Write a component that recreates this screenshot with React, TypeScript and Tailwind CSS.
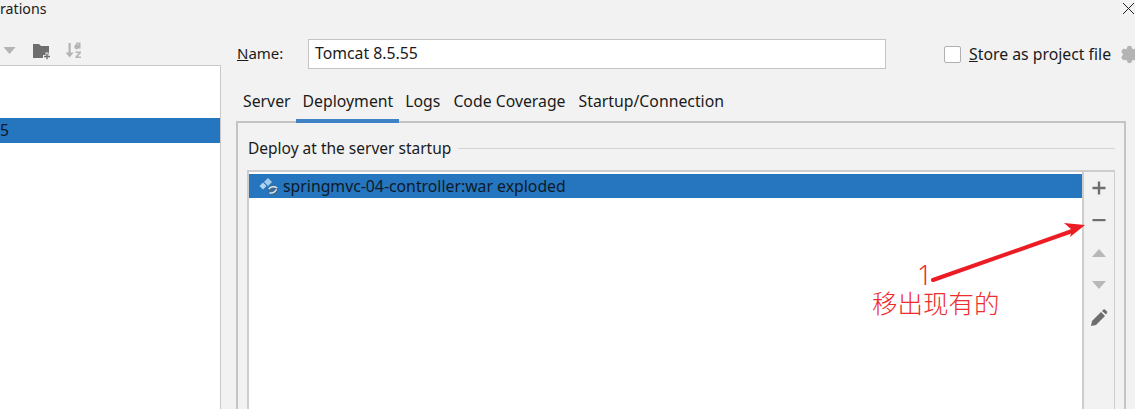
import { Settings } from "lucide-react";

const tabs = [
  { label: "Server", cls: "pl-[7px] pr-[5px]" },
  { label: "Deployment", cls: "pl-[7px] pr-[6px] border-b-4 border-[#3f83c6]" },
  { label: "Logs", cls: "pl-[6px] pr-[7px]" },
  { label: "Code Coverage", cls: "pl-[6px] pr-[7px]" },
  { label: "Startup/Connection", cls: "px-[6px]" },
];

function NewFolderIcon() {
  return (
    <svg width="19" height="17" viewBox="0 0 19 17">
      <path d="M0 1h6l2 2h8v9h-3v3H0z" fill="#6e6e6e" />
      <path d="M12.500 9.500h3v2.500H18v3h-2.500V17h-3v-2H10v-3h2.500z" fill="#f2f2f2" />
      <path d="M13.300 10.500h1.400v2.300H17v1.400h-2.300v2h-1.400v-2H11v-1.400h2.300z" fill="#6e6e6e" />
    </svg>
  );
}

function SortIcon() {
  return (
    <svg width="18" height="18" viewBox="0 0 18 18" fill="#b4b4b4">
      <path d="M3.500 2h2.200v9.500h3L4.600 16.500 0.500 11.500h3z" />
      <path d="M11 1.500h4.500v6H14V7a2.500 2.500 0 1 1-1-3.500h1c0-.8-1-1-3-.7z" fillRule="evenodd" />
      <path d="M10.500 10.500h5.500v1.500l-3.300 3.500H16V17h-5.500v-1.500l3.300-3.500h-3.300z" />
    </svg>
  );
}

function ArtifactIcon() {
  return (
    <svg width="20" height="18" viewBox="0 0 20 18">
      <path d="M9 1l4 4-4 4-4-4z" fill="#a4cbe8" />
      <path d="M4 5.500l3.500 3.500L4 12.500.500 9z" fill="#b4d6ee" />
      <circle cx="14" cy="13" r="5" fill="#3f6a8e" />
      <path d="M9.800 12c2-2.500 5.700-3 8.400-1M10.500 16c2.800.2 5.800-1 7-3.800" stroke="#dcebf5" strokeWidth="1.400" fill="none" />
    </svg>
  );
}

function SideTools() {
  return (
    <div className="w-[30px] shrink-0 flex flex-col items-center pt-[9px]">
      <svg width="14" height="14" viewBox="0 0 14 14" fill="#6e6e6e">
        <path d="M5.800 .5h2.400v5.300h5.300v2.400H8.200v5.300H5.800V8.200H.5V5.800h5.300z" />
      </svg>
      <svg className="mt-[18px]" width="14" height="14" viewBox="0 0 14 14" fill="#6e6e6e">
        <path d="M.5 6h13v2.200H.5z" />
      </svg>
      <svg className="mt-[22px]" width="16" height="8" viewBox="0 0 16 8" fill="#b8b8b8">
        <path d="M8 0l7 8H1z" />
      </svg>
      <svg className="mt-[24px]" width="16" height="8" viewBox="0 0 16 8" fill="#b8b8b8">
        <path d="M1 0h14l-7 8z" />
      </svg>
      <svg className="mt-[20px]" width="18" height="18" viewBox="0 0 18 18" fill="#6e6e6e">
        <path d="M1 17l1-5L11 3l4 4-9 9z" />
        <path d="M12 2l1.500-1.500a1 1 0 0 1 1.400 0l2.100 2.100a1 1 0 0 1 0 1.400L16 5.500z" />
      </svg>
    </div>
  );
}

export default function App() {
  return (
    <div
      className="relative w-[1135px] h-[409px] overflow-hidden bg-[#f2f2f2] text-[#1a1a1a] text-[15.8px] flex flex-col"
      style={{ fontFamily: '"Noto Sans", "Noto Sans CJK SC", sans-serif' }}
    >
      {/* title bar */}
      <div className="h-[39px] shrink-0 flex justify-between items-start">
        <span className="mt-[1px] leading-[16px] text-[14.2px]">rations</span>
        <svg className="mt-[2px]" width="13" height="13" viewBox="0 0 13 13" stroke="#222" strokeWidth="1" fill="none">
          <path d="M1 1l11 11M12 1L1 12" />
        </svg>
      </div>

      <div className="flex flex-1 min-h-0">
        {/* left tree */}
        <div className="w-[221px] shrink-0 flex flex-col">
          <div className="h-[26px] shrink-0 flex items-start pt-[3px]">
            <svg className="ml-[3px] mt-[5px]" width="13" height="7" viewBox="0 0 14 8" fill="#b4b4b4">
              <path d="M0 0h14l-7 8z" />
            </svg>
            <div className="ml-[17px] mt-[1px]"><NewFolderIcon /></div>
            <div className="ml-[13px] -mt-[1px]"><SortIcon /></div>
          </div>
          <div className="flex-1 bg-white border-t border-r border-[#c9c9c9] pt-[52px]">
            <div className="h-[25px] bg-[#2675bf] text-[#0d1b28] leading-[25px]">5</div>
          </div>
        </div>

        {/* right side */}
        <div className="flex-1 min-w-0 flex flex-col pl-[15px]">
          <div className="flex items-center h-[30px] shrink-0">
            <span className="w-[72px] shrink-0 pl-[1px] pb-[2px] text-[15px]"><u>N</u>ame:</span>
            <div className="w-[578px] shrink-0 h-[30px] bg-white border border-[#c4c4c4] pl-[6px] leading-[26px]">Tomcat 8.5.55</div>
            <div className="ml-[58px] shrink-0 w-[17px] h-[17px] rounded-[2px] bg-white border border-[#b0b0b0]" />
            <span className="ml-[8px] shrink-0 pt-[1px] whitespace-nowrap"><u>S</u>tore as project file</span>
            <Settings className="ml-[9px] shrink-0" size={19} color="#b4b4b4" fill="#b4b4b4" />
          </div>

          <div className="relative z-10 flex h-[54px] shrink-0 items-end">
            {tabs.map((t) => (
              <div key={t.label} className={`h-[34px] leading-[24px] whitespace-nowrap ${t.cls}`}>
                {t.label}
              </div>
            ))}
          </div>

          <div className="flex-1 min-h-0 w-[890px] -mt-[2px] border-t-2 border-x-2 border-[#c4c4c4] pl-[9px] pr-[9px] flex flex-col">
            <div className="flex items-center h-[47px] shrink-0 gap-[7px] pt-[4px] pl-[1px]">
              <span className="whitespace-nowrap text-[15.5px]">Deploy at the server startup</span>
              <div className="flex-1 h-px bg-[#d4d4d4]" />
            </div>
            <div className="flex flex-1 min-h-0 border-t-2 border-l-2 border-r border-[#cdcdcd]">
              <div className="flex-1 bg-white border-r-2 border-[#cdcdcd] pt-[2px]">
                <div className="h-[24px] bg-[#2675bf] text-[#0d1b28] flex items-center pl-[10px] gap-[4px]">
                  <ArtifactIcon />
                  <span className="leading-[24px]">springmvc-04-controller:war exploded</span>
                </div>
              </div>
              <SideTools />
            </div>
          </div>
        </div>
      </div>

      {/* red annotation */}
      <svg className="absolute left-[925px] top-[215px]" width="165" height="70" viewBox="0 0 165 70" fill="#ed1c24">
        <path d="M8 65L150 15" stroke="#ed1c24" strokeWidth="4" strokeLinecap="round" />
        <path d="M160 10L139 8l8 7-2 7z" />
      </svg>
      <span className="absolute left-[917px] top-[261px] text-[#ee2c2c] text-[27px] leading-[27px] font-light">1</span>
      <span className="absolute left-[872px] top-[289px] text-[#ee2c2c] text-[25.5px] leading-[28px] font-light whitespace-nowrap">移出现有的</span>
    </div>
  );
}
